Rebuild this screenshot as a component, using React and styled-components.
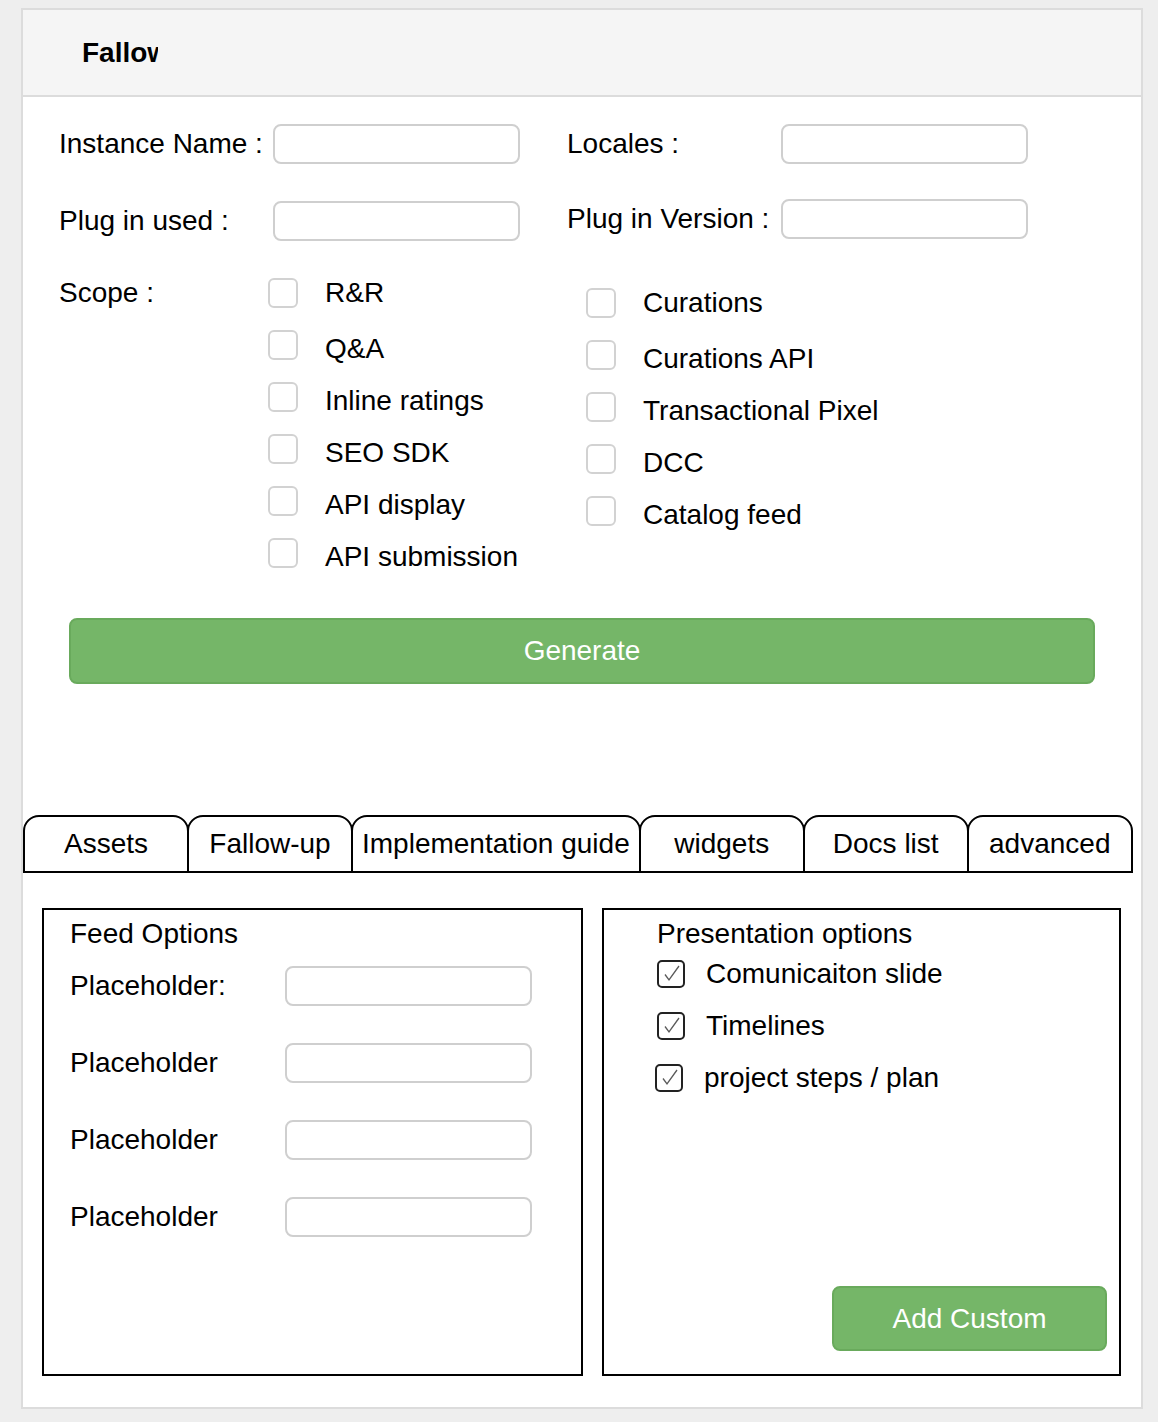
import React from "react";
import styled, { createGlobalStyle } from "styled-components";

const GlobalStyle = createGlobalStyle`
  body {
    margin: 0;
    background: #eeeeee;
    font-family: "Liberation Sans", Arial, Helvetica, sans-serif;
    font-size: 28px;
    line-height: 32px;
    color: #000;
  }
  * {
    box-sizing: border-box;
  }
`;

const scopeLeft = ["R&R", "Q&A", "Inline ratings", "SEO SDK", "API display", "API submission"];
const scopeRight = ["Curations", "Curations API", "Transactional Pixel", "DCC", "Catalog feed"];
const tabs = ["Assets", "Fallow-up", "Implementation guide", "widgets", "Docs list", "advanced"];
const presentation = [
  { label: "Comunicaiton slide", nudge: 0 },
  { label: "Timelines", nudge: 0 },
  { label: "project steps / plan", nudge: -2 },
];

export default function App() {
  return (
    <>
      <GlobalStyle />
      <Page>
        <Card>
          <Header>
            <Title>Fallow-up</Title>
          </Header>

          <Body>
            <FieldGrid>
              <Field>
                <FieldLabel>Instance Name :</FieldLabel>
                <TextInput />
              </Field>
              <Field>
                <FieldLabel>Locales :</FieldLabel>
                <TextInput />
              </Field>
              <Field>
                <FieldLabel>Plug in used :</FieldLabel>
                <TextInput />
              </Field>
              <Field $lift={1}>
                <FieldLabel>Plug in Version :</FieldLabel>
                <TextInput />
              </Field>
            </FieldGrid>

            <Scope>
              <ScopeLabel>Scope :</ScopeLabel>
              <CheckColumn $width={318}>
                {scopeLeft.map((item) => (
                  <CheckItem key={item}>
                    <EmptyBox />
                    <CheckText>{item}</CheckText>
                  </CheckItem>
                ))}
              </CheckColumn>
              <CheckColumn $offset={10}>
                {scopeRight.map((item) => (
                  <CheckItem key={item}>
                    <EmptyBox />
                    <CheckText>{item}</CheckText>
                  </CheckItem>
                ))}
              </CheckColumn>
            </Scope>

            <GenerateButton>Generate</GenerateButton>
          </Body>

          <TabBar>
            {tabs.map((t) => (
              <Tab key={t}>{t}</Tab>
            ))}
          </TabBar>

          <Panels>
            <Panel $width={541} $padLeft={26}>
              <PanelTitle>Feed Options</PanelTitle>
              <PanelFields>
                {["Placeholder:", "Placeholder", "Placeholder", "Placeholder"].map((p, i) => (
                  <Field key={i}>
                    <FieldLabel $width={215}>{p}</FieldLabel>
                    <TextInput />
                  </Field>
                ))}
              </PanelFields>
            </Panel>

            <Panel $width={519} $padLeft={53}>
              <PanelTitle>Presentation options</PanelTitle>
              <CheckedList>
                {presentation.map((p) => (
                  <CheckedItem key={p.label} $nudge={p.nudge}>
                    <TickBox>
                      <svg width="24" height="24" viewBox="0 0 24 24">
                        <polyline
                          points="6,12.5 10,18 20,4"
                          fill="none"
                          stroke="#5a5a5a"
                          strokeWidth="1.3"
                        />
                      </svg>
                    </TickBox>
                    <CheckText $gap={21}>{p.label}</CheckText>
                  </CheckedItem>
                ))}
              </CheckedList>
              <AddButton>Add Custom</AddButton>
            </Panel>
          </Panels>
        </Card>
      </Page>
    </>
  );
}

const Page = styled.div`
  padding: 8px 15px 13px 21px;
`;

const Card = styled.div`
  width: 1122px;
  background: #fff;
  border: 2px solid #dcdcdc;
  padding-bottom: 31px;
`;

const Header = styled.div`
  height: 87px;
  background: #f5f5f5;
  border-bottom: 2px solid #dcdcdc;
  display: flex;
  align-items: center;
  padding-left: 59px;
`;

const Title = styled.div`
  width: 76px;
  overflow: hidden;
  white-space: nowrap;
  font-weight: bold;
  font-size: 28px;
`;

const Body = styled.div`
  padding-top: 27px;
`;

const FieldGrid = styled.div`
  display: grid;
  grid-template-columns: 508px 461px;
  row-gap: 37px;
  padding-left: 36px;
`;

const Field = styled.div`
  display: flex;
  align-items: center;
  height: 40px;
  margin-top: ${(p) => (p.$lift ? -p.$lift * 2 : 0)}px;
  margin-bottom: ${(p) => (p.$lift ? p.$lift * 2 : 0)}px;
`;

const FieldLabel = styled.span`
  width: ${(p) => p.$width || 214}px;
  flex-shrink: 0;
  white-space: nowrap;
`;

const TextInput = styled.input`
  width: 247px;
  height: 40px;
  border: 2px solid #cfcfcf;
  border-radius: 8px;
  background: #fff;
  outline: none;
  font: inherit;
`;

const Scope = styled.div`
  display: flex;
  align-items: flex-start;
  margin-top: 37px;
  padding-left: 36px;
`;

const ScopeLabel = styled.div`
  width: 209px;
  line-height: 30px;
`;

const CheckColumn = styled.div`
  display: flex;
  flex-direction: column;
  gap: 22px;
  width: ${(p) => (p.$width ? `${p.$width}px` : "auto")};
  margin-top: ${(p) => p.$offset || 0}px;
`;

const CheckText = styled.span`
  margin-left: ${(p) => p.$gap || 27}px;
  white-space: nowrap;
`;

const CheckItem = styled.div`
  display: flex;
  align-items: center;
  height: 30px;
  &:not(:first-child) ${CheckText} {
    margin-top: 7px;
  }
`;

const EmptyBox = styled.span`
  width: 30px;
  height: 30px;
  border: 2px solid #d2d2d2;
  border-radius: 6px;
  flex-shrink: 0;
`;

const GreenButton = styled.button`
  background: #75b668;
  border: 2px solid #69aa5c;
  border-radius: 8px;
  color: #fff;
  font-family: inherit;
  font-size: 28px;
  cursor: pointer;
`;

const GenerateButton = styled(GreenButton)`
  display: block;
  width: 1026px;
  height: 66px;
  margin: 50px auto 0;
`;

const TabBar = styled.div`
  display: flex;
  margin-top: 131px;
`;

const Tab = styled.div`
  height: 58px;
  min-width: 166px;
  padding: 0 9px;
  display: flex;
  align-items: center;
  justify-content: center;
  border: 2px solid #000;
  border-radius: 16px 16px 0 0;
  background: #fff;
  white-space: nowrap;
  & + & {
    margin-left: -2px;
  }
`;

const Panels = styled.div`
  display: flex;
  gap: 19px;
  margin-top: 35px;
  padding-left: 19px;
`;

const Panel = styled.div`
  width: ${(p) => p.$width}px;
  height: 468px;
  border: 2px solid #000;
  padding: 8px 0 0 ${(p) => p.$padLeft}px;
  display: flex;
  flex-direction: column;
`;

const PanelTitle = styled.div`
  white-space: nowrap;
`;

const PanelFields = styled.div`
  display: flex;
  flex-direction: column;
  gap: 37px;
  margin-top: 16px;
`;

const CheckedList = styled.div`
  display: flex;
  flex-direction: column;
  gap: 24px;
  margin-top: 10px;
`;

const CheckedItem = styled.div`
  display: flex;
  align-items: center;
  height: 28px;
  margin-left: ${(p) => p.$nudge}px;
`;

const TickBox = styled.span`
  width: 28px;
  height: 28px;
  border: 2px solid #222;
  border-radius: 5px;
  flex-shrink: 0;
  display: flex;
  svg {
    display: block;
  }
`;

const AddButton = styled(GreenButton)`
  width: 275px;
  height: 65px;
  margin-top: auto;
  margin-bottom: 23px;
  margin-right: 12px;
  align-self: flex-end;
`;
